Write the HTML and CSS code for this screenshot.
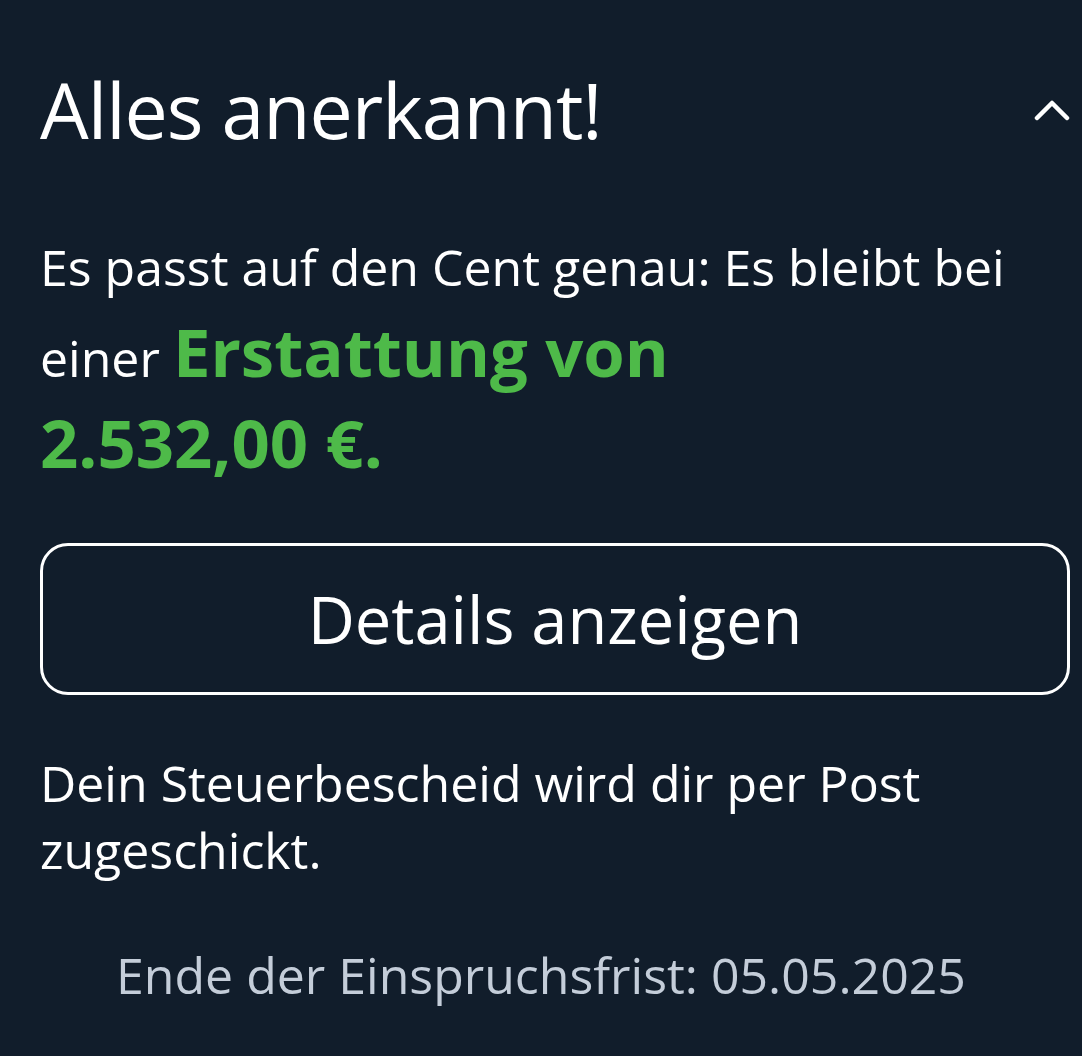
FILE: index.html
```html
<!DOCTYPE html>
<html lang="de">
<head>
  <meta charset="UTF-8">
  <meta name="viewport" content="width=device-width, initial-scale=1.0">
  <title>Alles anerkannt</title>
  <link rel="stylesheet" href="styles.css">
</head>
<body>
  <div class="card">
    <div class="card-head">
      <h1>Alles anerkannt!</h1>
      <svg class="chevron" width="36" height="22" viewBox="0 0 36 22">
        <polyline points="3,19 18,4 33,19" fill="none" stroke="#fff" stroke-width="4.5" stroke-linecap="round" stroke-linejoin="round"/>
      </svg>
    </div>

    <p class="result">Es passt auf den Cent genau: Es bleibt bei einer <strong class="refund">Erstattung von 2.532,00&nbsp;€.</strong></p>

    <button class="details">Details anzeigen</button>

    <p class="info">Dein Steuerbescheid wird dir per Post zugeschickt.</p>

    <p class="deadline">Ende der Einspruchsfrist: 05.05.2025</p>
  </div>
</body>
</html>
```

FILE: styles.css
```css
body {
  margin: 0;
  background-color: #111d2b;
  font-family: "Open Sans", "Noto Sans", sans-serif;
  color: #fff;
}
.card {
  padding: 64px 12px 40px 40px;
}
.card-head {
  display: flex;
  justify-content: space-between;
  align-items: center;
}
h1 {
  margin: 0;
  font-size: 77px;
  font-weight: 400;
  line-height: 1.2;
  letter-spacing: -1px;
}
.result {
  margin: 66px 55px 0 0;
  font-size: 50px;
  line-height: 91px;
}
.refund {
  color: #4eba49;
  font-size: 67px;
  font-weight: 700;
  line-height: 1.1;
}
.details {
  display: block;
  box-sizing: border-box;
  width: 100%;
  height: 152px;
  margin-top: 48px;
  border: 3px solid #fff;
  border-radius: 28px;
  background: transparent;
  color: #fff;
  font-family: inherit;
  font-size: 65px;
  cursor: pointer;
}
.info {
  margin: 55px 40px 0 0;
  font-size: 50px;
  line-height: 67px;
}
.deadline {
  margin: 57px 28px 0 0;
  text-align: center;
  color: #c4cdd9;
  font-size: 50px;
}
```
